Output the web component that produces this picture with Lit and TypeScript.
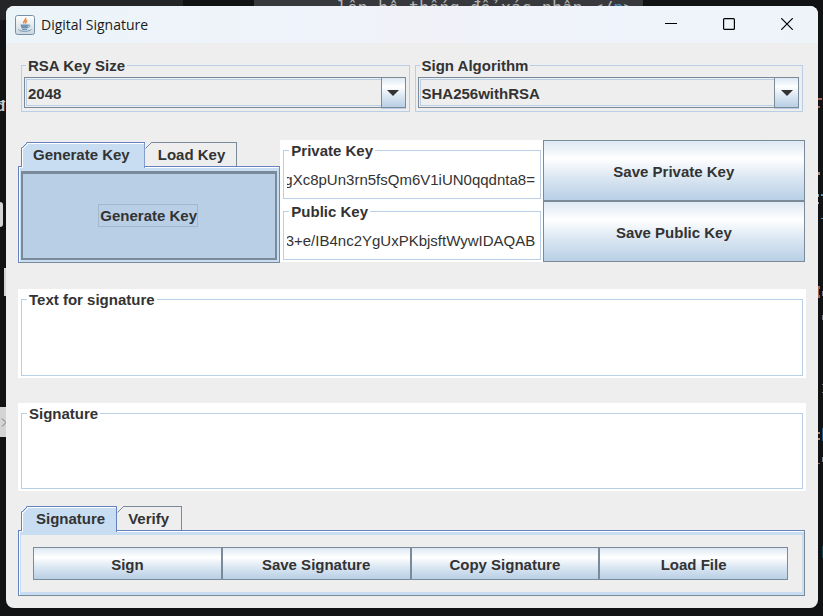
import { LitElement, html, css, svg } from "lit";
import { customElement, state } from "lit/decorators.js";

const CODE_MARKS = [
  { y: 98, w: 4, h: 2, r: 1, c: "#a8624c" },
  { y: 106, w: 2, h: 2, r: 3, c: "#a8624c" },
  { y: 172, w: 2, h: 3, r: 3, c: "#b08a74" },
  { y: 194, w: 2, h: 2, r: 0, c: "#5c8fb8" },
  { y: 194, w: 1, h: 3, r: 4, c: "#8fa8a8" },
  { y: 202, w: 1, h: 2, r: 4, c: "#8fa8a8" },
  { y: 218, w: 2, h: 1, r: 0, c: "#5c8fb8" },
  { y: 286, w: 2, h: 3, r: 3, c: "#a8624c" },
  { y: 289, w: 1, h: 6, r: 4, c: "#a8624c" },
  { y: 295, w: 2, h: 3, r: 3, c: "#a8624c" },
  { y: 291, w: 1, h: 5, r: 0, c: "#777d86" },
  { y: 315, w: 1, h: 5, r: 0, c: "#777d86" },
  { y: 384, w: 1, h: 1, r: 0, c: "#777d86" },
  { y: 392, w: 1, h: 1, r: 0, c: "#777d86" },
  { y: 428, w: 1, h: 13, r: 0, c: "#1d5584" },
  { y: 432, w: 2, h: 2, r: 3, c: "#b08a74" },
  { y: 438, w: 2, h: 2, r: 3, c: "#b08a74" },
  { y: 457, w: 1, h: 5, r: 0, c: "#777d86" },
  { y: 463, w: 2, h: 1, r: 3, c: "#a8624c" },
  { y: 546, w: 1, h: 12, r: 0, c: "#17414a" },
];

@customElement("app-root")
export class AppRoot extends LitElement {
  @state() private keyTab = "Generate Key";
  @state() private actionTab = "Signature";

  static styles = css`
    :host {
      position: relative;
      box-sizing: border-box;
      min-height: 100vh;
      padding: 6px 5px 8px 6px;
      overflow: hidden;
      background: #111214;
      font: bold 15px/17px "Liberation Sans", Arial, sans-serif;
      color: #333;
      display: flex;
    }
    * {
      box-sizing: border-box;
    }
    button,
    input,
    select,
    textarea {
      font: inherit;
      color: inherit;
      margin: 0;
      border-radius: 0;
    }
    .backdrop {
      position: absolute;
      inset: 0;
    }
    .strip {
      position: absolute;
      top: 0;
      height: 20px;
    }
    .strip-a {
      left: 0;
      width: 183px;
      background: #242527;
    }
    .strip-b {
      left: 254px;
      width: 389px;
      padding-left: 83px;
      background: #37393c;
      color: #b4b4b4;
      font: 17px/16px "DejaVu Sans Mono", monospace;
      white-space: nowrap;
    }
    .strip-b .tag {
      color: #4a8cc0;
    }
    .chip {
      position: absolute;
      left: 0;
      width: 8px;
      background: #d4d4d4;
    }
    .chip-a {
      top: 202px;
      width: 3px;
      height: 25px;
      border-radius: 0 4px 4px 0;
    }
    .chip-b {
      top: 268px;
      left: 4px;
      height: 28px;
    }
    .chip-c {
      top: 407px;
      height: 30px;
    }
    .chip svg {
      display: block;
      margin: 11px 0 0 1px;
    }
    .glyph {
      position: absolute;
      left: -4px;
      top: 97px;
      color: #c9cdd6;
    }
    .mark {
      position: absolute;
    }
    .window {
      position: relative;
      flex: 1;
      min-width: 0;
      display: flex;
      flex-direction: column;
      border-radius: 8px;
      background: #eee;
      overflow: hidden;
    }
    .titlebar {
      display: flex;
      align-items: center;
      height: 37px;
      padding: 0 2px 0 9px;
      background: linear-gradient(90deg, #ebf4f8, #eff3fb 35%, #f1f2f8 50%, #eff3fb 75%, #edf4f8);
      color: #1a1a1a;
    }
    .title {
      flex: 1;
      margin: 0 0 0 6px;
      font: 14px/20px "Open Sans", "Noto Sans", sans-serif;
    }
    .caption {
      width: 58px;
      height: 37px;
      padding: 0 0 2px;
      border: 0;
      background: none;
    }
    .caption svg {
      display: block;
      margin: 0 auto;
    }
    .logo {
      display: block;
    }
    .content {
      flex: 1;
      display: flex;
      flex-direction: column;
      padding: 14px 12px 12px;
    }
    .options {
      display: grid;
      grid-template-columns: 1fr 1fr;
      gap: 5px;
      padding: 0 3px;
    }
    fieldset {
      min-width: 0;
      margin: 0;
      padding: 3px;
      border: 1px solid #b8cfe5;
    }
    legend {
      margin-left: 1px;
      padding: 0 2px;
    }
    .options fieldset {
      padding-left: 2px;
    }
    .options legend {
      margin-left: 2px;
    }
    .combo {
      display: grid;
    }
    .combo > * {
      grid-area: 1 / 1;
    }
    .combo select {
      appearance: none;
      width: 100%;
      height: 31px;
      padding: 2px 28px 0 3px;
      border: 1px solid #7a8a99;
      background: #eee;
      outline: 1px solid #b8cfe5;
      outline-offset: -3px;
    }
    .arrow {
      justify-self: end;
      display: grid;
      place-items: center;
      width: 25px;
      height: 31px;
      pointer-events: none;
      box-shadow: 0 1px #b8cfe5;
    }
    .metal {
      border: 1px solid #7a8a99;
      background: linear-gradient(#dde8f3, #fff 30%, #dde8f3 60%, #b8cfe5);
    }
    .keys {
      display: grid;
      grid-template-columns: 1fr 1fr 1fr;
      margin-top: 28px;
      padding-right: 1px;
    }
    .tabs {
      display: flex;
      flex-direction: column;
      min-width: 0;
    }
    .keys .tabs {
      padding-top: 2px;
      margin-bottom: -1px;
    }
    .tablist {
      display: flex;
      padding-left: 3px;
    }
    .tab {
      position: relative;
      height: 24px;
      padding: 0 12px 0 13px;
      border: 0;
      background: linear-gradient(#7a8a99, #7a8a99) 6px 0 / 100% 1px no-repeat,
        linear-gradient(#7a8a99, #7a8a99) 100% 0 / 1px 100% no-repeat, #eee;
    }
    .tab svg {
      position: absolute;
      left: 0;
      top: 0;
    }
    .tab.on {
      z-index: 1;
      height: 26px;
      margin-bottom: -2px;
      padding: 0 14px 2px 11px;
      border-left: 1px solid #6382bf;
      border-right: 1px solid #6382bf;
      border-top: 1px solid #6382bf;
      background: #c8ddf2;
      box-shadow: inset 1px 1px #fff;
      clip-path: polygon(0 6px, 6px 0, 100% 0, 100% 100%, 1px 100%, 0 24px);
    }
    .tab.on svg {
      left: -1px;
      top: -1px;
    }
    .panel {
      flex: 1;
      display: grid;
      border: 1px solid #6382bf;
      border-right-color: #7a8a99;
      border-bottom-color: #7a8a99;
      background: #c8ddf2;
      box-shadow: inset 1px 1px #fff;
      padding: 4px 2px 3px;
    }
    .keys .panel {
      padding-bottom: 2px;
    }
    .generate {
      border: 2px solid #7a8a99;
      border-top-width: 3px;
      background: #b8cfe5;
      padding: 0 2px 2px 0;
    }
    .focus {
      display: inline-block;
      padding: 2px 0 2px 1px;
      border: 1px solid #a3b8cc;
    }
    .white {
      display: flex;
      flex-direction: column;
      background: #fff;
    }
    .white fieldset {
      flex: 1;
      margin: 2px 3px;
    }
    .white legend {
      margin-left: 2px;
    }
    .field fieldset {
      margin: 2px 2px 2px 3px;
      height: 57px;
      flex: none;
    }
    .field input {
      display: block;
      width: 100%;
      height: 34px;
      padding: 0 1px 0 0;
      border: 0;
      outline: 0;
      background: none;
      font-weight: normal;
    }
    .saves {
      display: grid;
      grid-template-rows: 61px 61px;
    }
    .saves button {
      padding: 1px 0 0;
    }
    .area {
      flex: 1 1 88px;
      margin-top: 26px;
    }
    .area + .area {
      margin-top: 25px;
    }
    .area textarea {
      display: block;
      width: 100%;
      height: 100%;
      min-height: 40px;
      padding: 0;
      border: 0;
      outline: 0;
      resize: none;
      background: none;
      font-weight: normal;
    }
    .areas {
      flex: 1;
      display: flex;
      flex-direction: column;
      padding-top: 1px;
    }
    .actions {
      margin: 15px 1px 0 0;
    }
    .actions .tab {
      padding: 0 13px 0 11px;
    }
    .actions .tab.on {
      padding: 0 11px 2px 14px;
    }
    .bar {
      display: grid;
      grid-template-columns: repeat(4, 1fr);
      padding: 12px 14px 12px 12px;
      background: #eee;
    }
    .bar button {
      height: 33px;
      padding: 2px 0 0;
    }
  `;

  firstUpdated() {
    this.renderRoot.querySelectorAll<HTMLInputElement>(".field input").forEach((el) => {
      el.scrollLeft = el.scrollWidth;
    });
  }

  private combo(id: string, label: string, options: string[]) {
    return html`<fieldset>
      <legend><label for=${id}>${label}</label></legend>
      <div class="combo">
        <select id=${id}>
          ${options.map((o) => html`<option>${o}</option>`)}
        </select>
        <span class="arrow metal">
          <svg width="12" height="6" viewBox="0 0 12 6"><path d="M0 0h12L6 6z" fill="#333" /></svg>
        </span>
      </div>
    </fieldset>`;
  }

  private tab(label: string, current: string, pick: (v: string) => void) {
    const on = label === current;
    return html`<button
      class="tab ${on ? "on" : ""}"
      role="tab"
      aria-selected=${on}
      @click=${() => pick(label)}
    >
      <svg width="8" height="8" aria-hidden="true">
        ${on
          ? svg`<path d="M1.5 7.5 7 2" stroke="#fff" fill="none"/><path d="M.5 6.5 6.5.5" stroke="#6382bf" fill="none"/>`
          : svg`<path d="M0 0h6L0 6z" fill="#eee"/><path d="M.5 6.5 6.5.5" stroke="#7a8a99" fill="none"/>`}</svg
      >${label}
    </button>`;
  }

  private field(id: string, label: string, value: string) {
    return html`<fieldset>
      <legend><label for=${id}>${label}</label></legend>
      <input id=${id} type="text" readonly .value=${value} />
    </fieldset>`;
  }

  private area(id: string, label: string) {
    return html`<div class="white area">
      <fieldset>
        <legend><label for=${id}>${label}</label></legend>
        <textarea id=${id}></textarea>
      </fieldset>
    </div>`;
  }

  render() {
    return html`
      <div class="backdrop" aria-hidden="true">
        <div class="strip strip-a"></div>
        <div class="strip strip-b">lên hệ thống để xác nhận &lt;/<span class="tag">p</span>&gt;</div>
        <div class="chip chip-a"></div>
        <div class="chip chip-b"></div>
        <div class="chip chip-c">
          <svg width="6" height="9"><path d="M1 .5 5 4.500 1 8.500" stroke="#777" fill="none" /></svg>
        </div>
        <div class="glyph">đ</div>
        ${CODE_MARKS.map(
          (m) =>
            html`<div
              class="mark"
              style="top:${m.y}px;right:${m.r}px;width:${m.w}px;height:${m.h}px;background:${m.c}"
            ></div>`
        )}
      </div>
      <main class="window">
        <header class="titlebar">
          <svg class="logo" width="20" height="20" viewBox="0 0 20 20" aria-hidden="true">
            <defs>
              <linearGradient id="g" x2="0" y2="1">
                <stop stop-color="#fff" />
                <stop offset="1" stop-color="#ccd6df" />
              </linearGradient>
            </defs>
            <rect x=".5" y=".5" width="19" height="19" rx="2" fill="url(#g)" stroke="#7590a8" />
            <path d="M10.5 3c1.500 2-3 2.500-1.500 5.500M12 5.500c-2 1-1.500 1.500-1 3" stroke="#e8843a" stroke-width="1.500" fill="none" />
            <path d="M5.500 9.500h8l-1 4h-6z" fill="#6f93b3" />
            <path d="M13 10.200c3-.7 2.500 2-.5 2.300M3.500 14.500c1 2.500 11 2.500 13-.2M7 14.500h5" stroke="#6f93b3" fill="none" />
          </svg>
          <h1 class="title">Digital Signature</h1>
          <button class="caption" aria-label="Minimize">
            <svg width="12" height="12"><path d="M0 5.500h12" stroke="#000" /></svg>
          </button>
          <button class="caption" aria-label="Maximize">
            <svg width="12" height="12"><rect x=".6" y=".6" width="10.800" height="10.800" rx="1" fill="none" stroke="#000" stroke-width="1.200" /></svg>
          </button>
          <button class="caption" aria-label="Close">
            <svg width="12" height="12"><path d="M.2.200 11.800 11.800M11.800.200.200 11.800" stroke="#000" stroke-width="1.200" /></svg>
          </button>
        </header>
        <div class="content">
          <div class="options">
            ${this.combo("size", "RSA Key Size", ["2048"])}
            ${this.combo("algo", "Sign Algorithm", ["SHA256withRSA"])}
          </div>
          <div class="keys">
            <div class="tabs">
              <div class="tablist" role="tablist">
                ${["Generate Key", "Load Key"].map((t) => this.tab(t, this.keyTab, (v) => (this.keyTab = v)))}
              </div>
              <div class="panel" role="tabpanel">
                <button class="generate"><span class="focus">Generate Key</span></button>
              </div>
            </div>
            <div class="white field">
              ${this.field("priv", "Private Key", "PgXc8pUn3rn5fsQm6V1iUN0qqdnta8=")}
              ${this.field("pub", "Public Key", "43+e/IB4nc2YgUxPKbjsftWywIDAQAB")}
            </div>
            <div class="saves">
              <button class="metal">Save Private Key</button>
              <button class="metal">Save Public Key</button>
            </div>
          </div>
          <div class="areas">${this.area("text", "Text for signature")} ${this.area("sig", "Signature")}</div>
          <div class="tabs actions">
            <div class="tablist" role="tablist">
              ${["Signature", "Verify"].map((t) => this.tab(t, this.actionTab, (v) => (this.actionTab = v)))}
            </div>
            <div class="panel" role="tabpanel">
              <div class="bar">
                ${["Sign", "Save Signature", "Copy Signature", "Load File"].map(
                  (t) => html`<button class="metal">${t}</button>`
                )}
              </div>
            </div>
          </div>
        </div>
      </main>
    `;
  }
}
